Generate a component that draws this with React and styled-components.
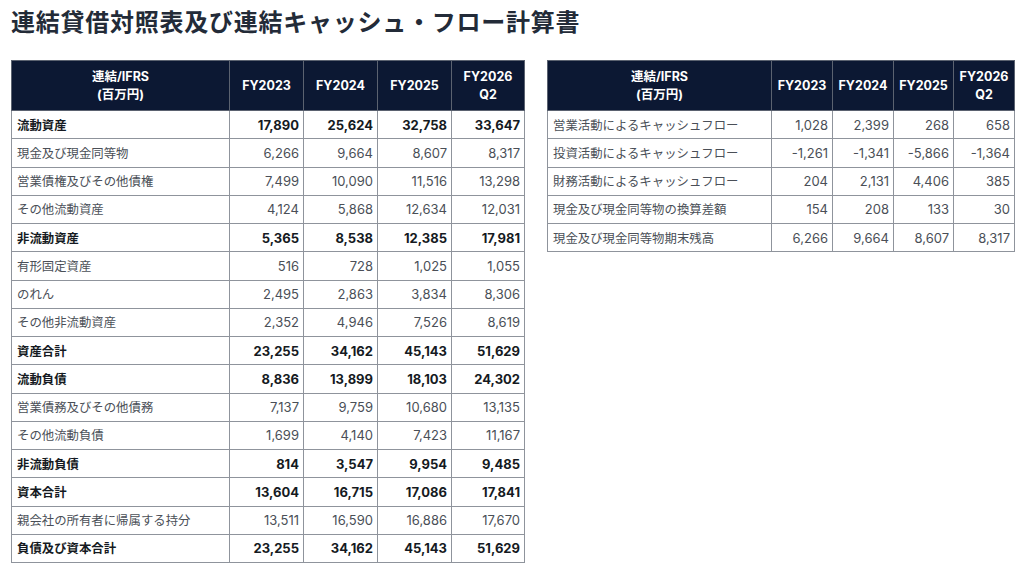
import React from "react";
import styled, { createGlobalStyle } from "styled-components";

const GlobalStyle = createGlobalStyle`
  * { box-sizing: border-box; }
  html, body { margin: 0; padding: 0; background: #ffffff; }
  body { font-family: Inter, "Noto Sans CJK JP", sans-serif; }
`;

const Page = styled.div`
  padding: 8px 11px 0 11px;
`;

const Title = styled.h1`
  margin: 0 0 22px 0;
  font-family: Inter, "Noto Sans CJK JP", sans-serif;
  font-size: 24px;
  line-height: 30px;
  font-weight: 700;
  color: #232b38;
  letter-spacing: 0.75px;
`;

const Tables = styled.div`
  display: flex;
  align-items: flex-start;
  gap: 22px;
`;

const Table = styled.table`
  border-collapse: collapse;
  table-layout: fixed;
  width: ${(p) => p.$width}px;
  font-size: 13px;
`;

const HeadCell = styled.th`
  background: #0c1833;
  color: #ffffff;
  font-weight: 700;
  font-size: 12.5px;
  line-height: 18px;
  height: 50px;
  padding: 0 4px;
  text-align: center;
  border: 1px solid #5b6270;
  white-space: nowrap;
`;

const LabelCell = styled.td`
  height: 28.25px;
  padding: 0 5px;
  text-align: left;
  border: 1px solid #8f949c;
  color: ${(p) => (p.$bold ? "#151a22" : "#4a4f57")};
  font-weight: ${(p) => (p.$bold ? 700 : 400)};
  font-size: 12.4px;
  white-space: nowrap;
`;

const NumCell = styled(LabelCell)`
  text-align: right;
  font-size: 13px;
  padding: 0 4px 0 4px;
`;

const bs = [
  ["流動資産", ["17,890", "25,624", "32,758", "33,647"], true],
  ["現金及び現金同等物", ["6,266", "9,664", "8,607", "8,317"]],
  ["営業債権及びその他債権", ["7,499", "10,090", "11,516", "13,298"]],
  ["その他流動資産", ["4,124", "5,868", "12,634", "12,031"]],
  ["非流動資産", ["5,365", "8,538", "12,385", "17,981"], true],
  ["有形固定資産", ["516", "728", "1,025", "1,055"]],
  ["のれん", ["2,495", "2,863", "3,834", "8,306"]],
  ["その他非流動資産", ["2,352", "4,946", "7,526", "8,619"]],
  ["資産合計", ["23,255", "34,162", "45,143", "51,629"], true],
  ["流動負債", ["8,836", "13,899", "18,103", "24,302"], true],
  ["営業債務及びその他債務", ["7,137", "9,759", "10,680", "13,135"]],
  ["その他流動負債", ["1,699", "4,140", "7,423", "11,167"]],
  ["非流動負債", ["814", "3,547", "9,954", "9,485"], true],
  ["資本合計", ["13,604", "16,715", "17,086", "17,841"], true],
  ["親会社の所有者に帰属する持分", ["13,511", "16,590", "16,886", "17,670"]],
  ["負債及び資本合計", ["23,255", "34,162", "45,143", "51,629"], true],
];

const cf = [
  ["営業活動によるキャッシュフロー", ["1,028", "2,399", "268", "658"]],
  ["投資活動によるキャッシュフロー", ["-1,261", "-1,341", "-5,866", "-1,364"]],
  ["財務活動によるキャッシュフロー", ["204", "2,131", "4,406", "385"]],
  ["現金及び現金同等物の換算差額", ["154", "208", "133", "30"]],
  ["現金及び現金同等物期末残高", ["6,266", "9,664", "8,607", "8,317"]],
];

function FinTable({ widths, rows }) {
  const total = widths.reduce((a, b) => a + b, 0);
  return (
    <Table $width={total}>
      <colgroup>
        {widths.map((w, i) => (
          <col key={i} style={{ width: w }} />
        ))}
      </colgroup>
      <thead>
        <tr>
          <HeadCell>
            連結/IFRS
            <br />
            (百万円)
          </HeadCell>
          <HeadCell>FY2023</HeadCell>
          <HeadCell>FY2024</HeadCell>
          <HeadCell>FY2025</HeadCell>
          <HeadCell>
            FY2026
            <br />
            Q2
          </HeadCell>
        </tr>
      </thead>
      <tbody>
        {rows.map(([label, vals, bold]) => (
          <tr key={label}>
            <LabelCell $bold={bold}>{label}</LabelCell>
            {vals.map((v, i) => (
              <NumCell key={i} $bold={bold}>
                {v}
              </NumCell>
            ))}
          </tr>
        ))}
      </tbody>
    </Table>
  );
}

export default function App() {
  return (
    <>
      <GlobalStyle />
      <Page>
        <Title>連結貸借対照表及び連結キャッシュ・フロー計算書</Title>
        <Tables>
          <FinTable widths={[218, 74, 74, 74, 73]} rows={bs} />
          <FinTable widths={[224, 61, 61, 60, 61]} rows={cf} />
        </Tables>
      </Page>
    </>
  );
}
